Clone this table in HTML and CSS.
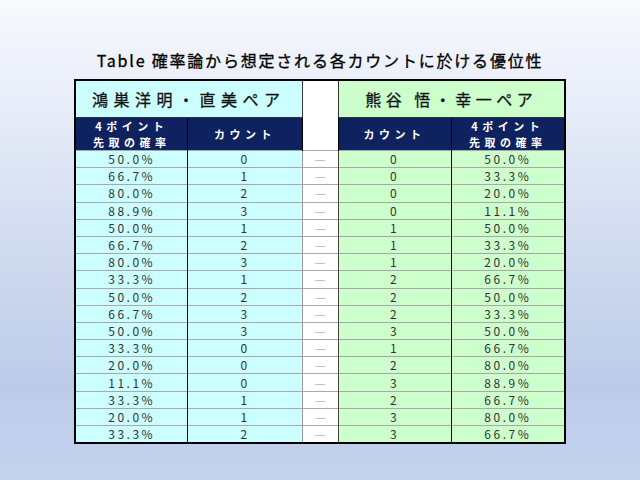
FILE: index.html
```html
<!DOCTYPE html>
<html lang="ja">
<head>
<meta charset="utf-8">
<link rel="stylesheet" href="styles.css">
</head>
<body>
<div class="slide">
  <h1 class="title">Table 確率論から想定される各カウントに於ける優位性</h1>
  <table class="grid">
    <colgroup>
      <col class="c-wide"><col class="c-wide2"><col class="c-mid"><col class="c-wide"><col class="c-wide2">
    </colgroup>
    <thead>
      <tr class="h1">
        <th colspan="2" class="team left">鴻巣洋明・直美ペア</th>
        <th rowspan="2" class="gap"></th>
        <th colspan="2" class="team right">熊谷 悟・幸一ペア</th>
      </tr>
      <tr class="h2">
        <th class="sub">4ポイント<br>先取の確率</th>
        <th class="sub">カウント</th>
        <th class="sub">カウント</th>
        <th class="sub">4ポイント<br>先取の確率</th>
      </tr>
    </thead>
    <tbody id="rows"></tbody>
  </table>
</div>
<script>
const data = [
  ["50.0%","0","0","50.0%"],["66.7%","1","0","33.3%"],["80.0%","2","0","20.0%"],
  ["88.9%","3","0","11.1%"],["50.0%","1","1","50.0%"],["66.7%","2","1","33.3%"],
  ["80.0%","3","1","20.0%"],["33.3%","1","2","66.7%"],["50.0%","2","2","50.0%"],
  ["66.7%","3","2","33.3%"],["50.0%","3","3","50.0%"],["33.3%","0","1","66.7%"],
  ["20.0%","0","2","80.0%"],["11.1%","0","3","88.9%"],["33.3%","1","2","66.7%"],
  ["20.0%","1","3","80.0%"],["33.3%","2","3","66.7%"]
];
const tb = document.getElementById('rows');
for (const r of data) {
  const tr = document.createElement('tr');
  tr.innerHTML = `<td class="cy">${r[0]}</td><td class="cy sep">${r[1]}</td><td class="dash">—</td><td class="gr">${r[2]}</td><td class="gr sepl">${r[3]}</td>`;
  tb.appendChild(tr);
}
</script>
</body>
</html>
```

FILE: styles.css
```css
html, body {
  margin: 0;
  padding: 0;
}
body {
  width: 640px;
  height: 480px;
  overflow: hidden;
}
.slide {
  width: 640px;
  height: 480px;
  background: linear-gradient(180deg, #f8f9fc 0%, #eef2fb 12%, #d6dff1 45%, #bccbe8 80%, #c3d3ee 100%);
  display: flex;
  flex-direction: column;
  align-items: center;
  font-family: "Noto Sans CJK JP", "Noto Sans", sans-serif;
}
.title {
  margin: 50px 0 0 0;
  height: 20px;
  line-height: 20px;
  font-size: 16px;
  font-weight: normal;
  letter-spacing: 1.8px;
  color: #000;
  -webkit-text-stroke: 0.3px #000;
}
.grid {
  margin-top: 9px;
  width: 490px;
  table-layout: fixed;
  border-collapse: collapse;
  border: 2px solid #000;
}
.c-wide { width: 113px; }
.c-wide2 { width: 114px; }
.c-mid { width: 36px; }

.h1 th {
  height: 36px;
  padding: 0;
  font-size: 16px;
  font-weight: normal;
  letter-spacing: 5.5px;
  color: #111;
  -webkit-text-stroke: 0.3px #111;
}
.team.left {
  background: #ccffff;
  border-right: 1px solid #333;
  border-bottom: 1px solid #333;
}
.team.right {
  background: #ccffcc;
  border-left: 1px solid #333;
  border-bottom: 1px solid #333;
  letter-spacing: 4.5px;
}
.gap {
  background: #fff;
  border-top: 1px solid #999;
}
.h2 th.sub {
  height: 32px;
  padding: 0;
  background: #0e2260;
  color: #fff;
  font-size: 11px;
  font-weight: bold;
  line-height: 16px;
  letter-spacing: 4.5px;
  border-left: 1px solid #000;
  border-right: 1px solid #000;
}
tbody td {
  height: 16.2px;
  padding: 0;
  text-align: center;
  font-size: 12px;
  line-height: 16px;
  letter-spacing: 2.5px;
  color: #333;
  border-top: 1px solid #a8a8a8;
}
td.cy { background: #ccffff; }
td.gr { background: #ccffcc; }
td.sep { border-left: 1px solid #000; border-right: 1px solid #999; }
td.sepl { border-left: 1px solid #000; }
td.dash {
  background: #fff;
  color: #b0b0b0;
  font-size: 12px;
  letter-spacing: 0;
  border-right: 1px solid #444;
}
```
